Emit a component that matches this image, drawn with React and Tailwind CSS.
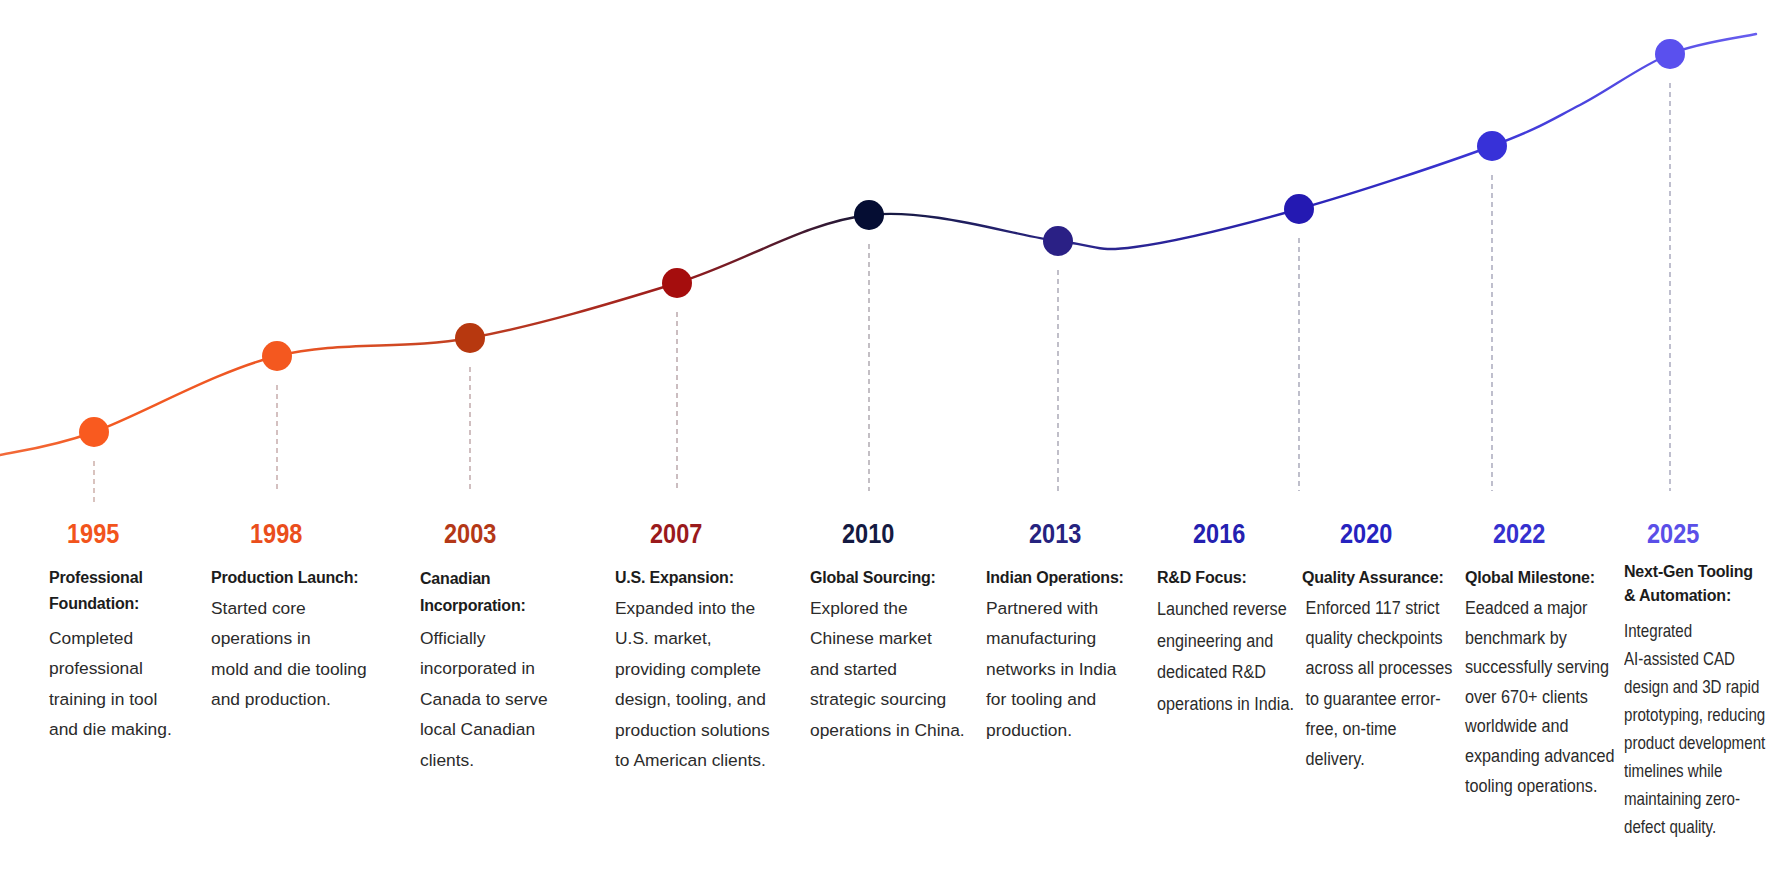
import React from "react";

const curvePts = [
  [0, 455], [94, 432], [277, 356], [470, 338], [677, 283], [869, 215],
  [1058, 241], [1135, 247], [1299, 209], [1492, 146], [1580, 105], [1670, 54], [1756, 34],
];

function catmull(pts) {
  let d = `M ${pts[0][0]} ${pts[0][1]}`;
  for (let i = 0; i < pts.length - 1; i++) {
    const p0 = pts[Math.max(0, i - 1)];
    const p1 = pts[i];
    const p2 = pts[i + 1];
    const p3 = pts[Math.min(pts.length - 1, i + 2)];
    const c1x = p1[0] + (p2[0] - p0[0]) / 6;
    const c1y = p1[1] + (p2[1] - p0[1]) / 6;
    const c2x = p2[0] - (p3[0] - p1[0]) / 6;
    const c2y = p2[1] - (p3[1] - p1[1]) / 6;
    d += ` C ${c1x.toFixed(1)} ${c1y.toFixed(1)}, ${c2x.toFixed(1)} ${c2y.toFixed(1)}, ${p2[0]} ${p2[1]}`;
  }
  return d;
}

const dots = [
  { x: 94, y: 432, c: "#f95a1f", end: 504, dc: "#c9aaa4" },
  { x: 277, y: 356, c: "#f4581f", end: 491, dc: "#c2a6a6" },
  { x: 470, y: 338, c: "#b7380f", end: 491, dc: "#bda4a6" },
  { x: 677, y: 283, c: "#a50d0d", end: 491, dc: "#b6a2a6" },
  { x: 869, y: 215, c: "#050d33", end: 491, dc: "#aaa4ac" },
  { x: 1058, y: 241, c: "#2a2085", end: 491, dc: "#a6a4b2" },
  { x: 1299, y: 209, c: "#2419b2", end: 491, dc: "#a4a4b6" },
  { x: 1492, y: 146, c: "#3731d8", end: 491, dc: "#a4a4b8" },
  { x: 1670, y: 54, c: "#5a50ee", end: 491, dc: "#a4a4ba" },
];

const cols = [
  {
    year: "1995", color: "text-[#f2541c]", col: "w-[162px]", yw: "w-[88px]",
    tmt: "mt-[17px]", tlh: "leading-[26px]", bmt: "mt-[6px]", blh: "leading-[30.4px]", bx: "text-[17.4px]",
    title: ["Professional", "Foundation:"],
    body: ["Completed", "professional", "training in tool", "and die making."],
  },
  {
    year: "1998", color: "text-[#ea4e1c]", col: "w-[209px]", yw: "w-[130px]",
    tmt: "mt-[17px]", tlh: "leading-[26px]", bmt: "mt-[2px]", blh: "leading-[30.4px]", bx: "text-[17.4px]",
    title: ["Production Launch:"],
    body: ["Started core", "operations in", "mold and die tooling", "and production."],
  },
  {
    year: "2003", color: "text-[#b43817]", col: "w-[195px]", yw: "w-[100px]",
    tmt: "mt-[17px]", tlh: "leading-[27px]", bmt: "mt-[4px]", blh: "leading-[30.4px]", bx: "text-[17.4px]",
    title: ["Canadian", "Incorporation:"],
    body: ["Officially", "incorporated in", "Canada to serve", "local Canadian", "clients."],
  },
  {
    year: "2007", color: "text-[#9a1a1c]", col: "w-[195px]", yw: "w-[122px]",
    tmt: "mt-[17px]", tlh: "leading-[26px]", bmt: "mt-[2px]", blh: "leading-[30.4px]", bx: "text-[17.4px]",
    title: ["U.S. Expansion:"],
    body: ["Expanded into the", "U.S. market,", "providing complete", "design, tooling, and", "production solutions", "to American clients."],
  },
  {
    year: "2010", color: "text-[#141a42]", col: "w-[176px]", yw: "w-[116px]",
    tmt: "mt-[17px]", tlh: "leading-[26px]", bmt: "mt-[2px]", blh: "leading-[30.4px]", bx: "text-[17.4px]",
    title: ["Global Sourcing:"],
    body: ["Explored the", "Chinese market", "and started", "strategic sourcing", "operations in China."],
  },
  {
    year: "2013", color: "text-[#26237f]", col: "w-[171px]", yw: "w-[138px]",
    tmt: "mt-[17px]", tlh: "leading-[26px]", bmt: "mt-[2px]", blh: "leading-[30.4px]", bx: "text-[17.4px]",
    title: ["Indian Operations:"],
    body: ["Partnered with", "manufacturing", "networks in India", "for tooling and", "production."],
  },
  {
    year: "2016", color: "text-[#2420b0]", col: "w-[145px]", yw: "w-[124px]",
    tmt: "mt-[17px]", tlh: "leading-[26px]", bmt: "mt-[3px]", blh: "leading-[31.5px]", bx: "text-[18px] scale-x-[0.9] origin-left",
    title: ["R&D Focus:"],
    body: ["Launched reverse", "engineering and", "dedicated R&D", "operations in India."],
  },
  {
    year: "2020", color: "text-[#2623bf]", col: "w-[163px]", yw: "w-[128px]",
    tmt: "mt-[17px]", tlh: "leading-[26px]", bmt: "mt-[2px]", blh: "leading-[30.2px]", bx: "text-[18px] scale-x-[0.9] origin-left pl-[4px]",
    title: ["Quality Assurance:"],
    body: ["Enforced 117 strict", "quality checkpoints", "across all processes", "to guarantee error-", "free, on-time", "delivery."],
  },
  {
    year: "2022", color: "text-[#3530cf]", col: "w-[159px]", yw: "w-[108px]",
    tmt: "mt-[17px]", tlh: "leading-[26px]", bmt: "mt-[3px]", blh: "leading-[29.6px]", bx: "text-[18px] scale-x-[0.9] origin-left",
    title: ["Qlobal Milestone:"],
    body: ["Eeadced a major", "benchmark by", "successfully serving", "over 670+ clients", "worldwide and", "expanding advanced", "tooling operations."],
  },
  {
    year: "2025", color: "text-[#5a4fe8]", col: "w-[150px]", yw: "w-[98px]",
    tmt: "mt-[12px]", tlh: "leading-[24px]", bmt: "mt-[9px]", blh: "leading-[28px]", bx: "text-[17.7px] scale-x-[0.855] origin-left",
    title: ["Next-Gen Tooling", "& Automation:"],
    body: ["Integrated", "AI-assisted CAD", "design and 3D rapid", "prototyping, reducing", "product development", "timelines while", "maintaining zero-", "defect quality."],
  },
];

function Chart() {
  const d = catmull(curvePts);
  return (
    <svg width="1774" height="510" viewBox="0 0 1774 510" className="block">
      <defs>
        <linearGradient id="lineGrad" gradientUnits="userSpaceOnUse" x1="0" y1="0" x2="1774" y2="0">
          <stop offset="0" stopColor="#f26a3a" />
          <stop offset="0.06" stopColor="#f35a22" />
          <stop offset="0.16" stopColor="#ec5624" />
          <stop offset="0.265" stopColor="#bf3f22" />
          <stop offset="0.38" stopColor="#9b1c1c" />
          <stop offset="0.49" stopColor="#15183a" />
          <stop offset="0.6" stopColor="#2a2585" />
          <stop offset="0.73" stopColor="#2a23b4" />
          <stop offset="0.84" stopColor="#3c36d6" />
          <stop offset="1" stopColor="#6a60f0" />
        </linearGradient>
      </defs>
      {dots.map((p, i) => (
        <line
          key={"l" + i}
          x1={p.x}
          y1={p.y + 29}
          x2={p.x}
          y2={p.end}
          stroke={p.dc}
          strokeWidth="1.4"
          strokeDasharray="5 4"
        />
      ))}
      <path d={d} fill="none" stroke="url(#lineGrad)" strokeWidth="2.4" strokeLinecap="round" />
      {dots.map((p, i) => (
        <circle key={"c" + i} cx={p.x} cy={p.y} r="15" fill={p.c} />
      ))}
    </svg>
  );
}

export default function App() {
  return (
    <div className="w-[1774px] h-[887px] bg-white overflow-hidden font-['Liberation_Sans',Arial,sans-serif]">
      <Chart />
      <div className="mt-[10px] flex pl-[49px]">
        {cols.map((c) => (
          <div key={c.year} className={`${c.col} shrink-0 flex flex-col`}>
            <div className={`${c.yw} ${c.color} text-center text-[28px] leading-[28px] font-bold`}>
              <span className="inline-block scale-x-[0.84]">{c.year}</span>
            </div>
            <div
              className={`${c.tmt} ${c.tlh} text-[16px] font-bold text-[#1c1c1c] tracking-[-0.2px] whitespace-nowrap`}
            >
              {c.title.map((t, i) => (
                <div key={i}>{t}</div>
              ))}
            </div>
            <div className={`${c.bmt} ${c.blh} ${c.bx} text-[#2b2b2b] whitespace-nowrap`}>
              {c.body.map((t, i) => (
                <div key={i}>{t}</div>
              ))}
            </div>
          </div>
        ))}
      </div>
    </div>
  );
}
